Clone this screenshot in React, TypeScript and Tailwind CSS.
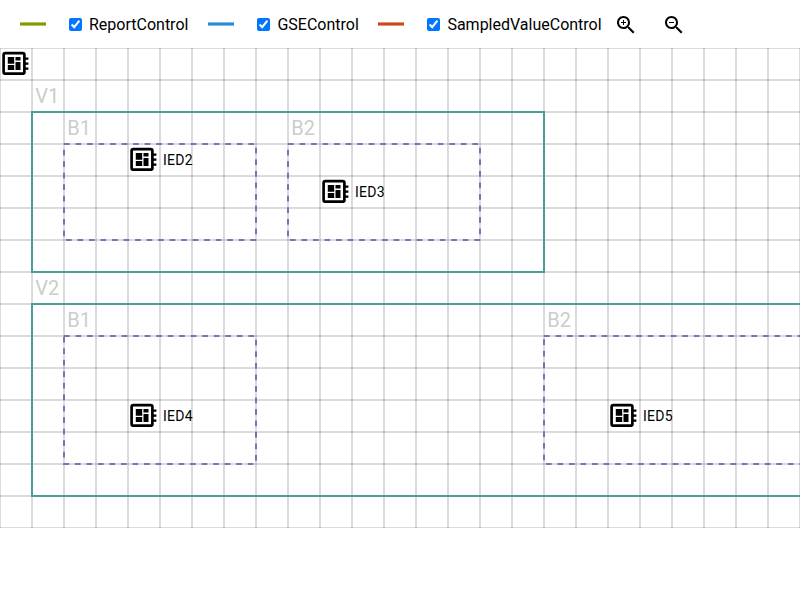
import React from "react";

const CELL = 32;

function ZoomIcon({ plus }: { plus?: boolean }) {
  return (
    <svg className="h-6 w-6 fill-black" viewBox="0 0 24 24">
      <path d="M15.5 14h-.79l-.28-.27C15.41 12.59 16 11.11 16 9.5 16 5.91 13.09 3 9.5 3S3 5.91 3 9.5 5.91 16 9.5 16c1.61 0 3.09-.59 4.23-1.57l.27.28v.79l5 4.99L20.49 19l-4.99-5zm-6 0C7.01 14 5 11.99 5 9.5S7.01 5 9.5 5 14 7.01 14 9.5 11.99 14 9.5 14z" />
      {plus ? <path d="M12 10h-2v2H9v-2H7V9h2V7h1v2h2v1z" /> : <path d="M7 9h5v1H7z" />}
    </svg>
  );
}

function Legend({ label, swatch, width }: { label: string; swatch: string; width: string }) {
  return (
    <div className={`flex h-12 items-center ${width}`}>
      <span className={`h-[4px] w-[26px] border-y ${swatch}`} />
      <input type="checkbox" defaultChecked className="ml-[23px] h-[13px] w-[13px]" />
      <span className="ml-[7px] whitespace-nowrap pt-0.5">{label}</span>
    </div>
  );
}

function Ied({ x, y, name }: { x: number; y: number; name?: string }) {
  return (
    <g transform={`translate(${x * CELL} ${y * CELL})`}>
      <rect x="3.6" y="5.1" width="20.8" height="20.6" rx="1.8" fill="white" stroke="black" strokeWidth="2.7" />
      <path d="M25 9.4h3.4v2.3H25zM25 14.4h3.4v2.3H25zM25 19.4h3.4v2.3H25z" />
      <path d="M7.8 9.1h6.4v6.6H7.8zM7.8 17.1h6.4v4.8H7.8zM15.5 9.1h5v3.5h-5zM15.5 14.1h5v7.8h-5z" />
      {name && (
        <text x="35" y="21" fontSize="14" textLength="29.5">
          {name}
        </text>
      )}
    </g>
  );
}

type AreaProps = { x: number; y: number; w: number; h: number; name: string; bay?: boolean };

function Area({ x, y, w, h, name, bay }: AreaProps) {
  return (
    <g>
      <rect
        x={x * CELL}
        y={y * CELL}
        width={w * CELL}
        height={h * CELL}
        fill="none"
        stroke={bay ? "#7377b8" : "#4a9f98"}
        strokeWidth="2"
        strokeDasharray={bay ? "5.76" : undefined}
      />
      <text x={x * CELL + 3.2} y={y * CELL - 9} fontSize="20" fill="#cccccc">
        {name}
      </text>
    </g>
  );
}

export default function App() {
  return (
    <div className="h-[600px] w-[800px] overflow-hidden bg-white font-[Roboto,sans-serif] text-base text-black">
      <header className="flex h-12 items-center pl-5">
        <Legend label="ReportControl" swatch="bg-[#859900] border-[#b6c266]" width="w-[188.4px]" />
        <Legend label="GSEControl" swatch="bg-[#268bd2] border-[#7db9e4]" width="w-[170px]" />
        <Legend label="SampledValueControl" swatch="bg-[#cb4b16] border-[#e0937a]" width="w-[235.6px]" />
        <button className="flex h-12 w-12 items-center pt-px"><ZoomIcon plus /></button>
        <button className="flex h-12 w-12 items-center pt-px"><ZoomIcon /></button>
      </header>
      <svg className="block" width="800" height="480">
        {Array.from({ length: 26 }, (_, i) => (
          <path key={`v${i}`} d={`M${i * CELL} 0v480`} stroke="black" strokeOpacity="0.14" strokeWidth="2" />
        ))}
        {Array.from({ length: 16 }, (_, i) => (
          <path key={`h${i}`} d={`M0 ${i * CELL}h800`} stroke="black" strokeOpacity="0.14" strokeWidth="2" />
        ))}
        <Area x={1} y={2} w={16} h={5} name="V1" />
        <Area x={2} y={3} w={6} h={3} name="B1" bay />
        <Area x={9} y={3} w={6} h={3} name="B2" bay />
        <Area x={1} y={8} w={28} h={6} name="V2" />
        <Area x={2} y={9} w={6} h={4} name="B1" bay />
        <Area x={17} y={9} w={10} h={4} name="B2" bay />
        <Ied x={0} y={0} />
        <Ied x={4} y={3} name="IED2" />
        <Ied x={10} y={4} name="IED3" />
        <Ied x={4} y={11} name="IED4" />
        <Ied x={19} y={11} name="IED5" />
      </svg>
    </div>
  );
}
